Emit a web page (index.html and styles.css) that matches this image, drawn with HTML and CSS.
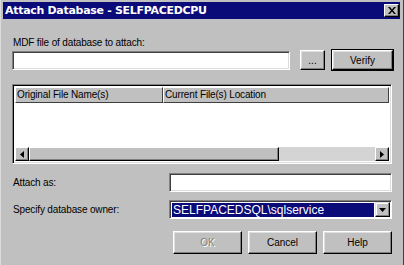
FILE: index.html
```html
<!DOCTYPE html>
<html lang="en">
  <head>
    <meta charset="UTF-8" />
    <title>Attach Database</title>
    <link rel="stylesheet" href="styles.css">
  </head>
  <body>
    <div class="window">
      <div class="titlebar">
        <span class="title">Attach Database - SELFPACEDCPU</span>
        <button class="close" aria-label="Close">
          <svg width="8" height="7" viewBox="0 0 8 7">
            <path d="M0 0h2l2 2.5L6 0h2L5 3.5 8 7H6L4 4.5 2 7H0l3-3.5z" fill="#000"/>
          </svg>
        </button>
      </div>

      <div class="content">
        <label class="label first">MDF file of database to attach:</label>
        <div class="file-row">
          <input class="field file-field" type="text" />
          <button class="btn browse">...</button>
          <button class="btn default verify">Verify</button>
        </div>

        <div class="listview">
          <div class="lv-header">
            <div class="lv-col col-1">Original File Name(s)</div>
            <div class="lv-col col-2">Current File(s) Location</div>
          </div>
          <div class="lv-body"></div>
          <div class="hscroll">
            <div class="sb-btn">
              <svg width="4" height="7" viewBox="0 0 4 7"><path d="M4 0v7L0 3.5z" fill="#000"/></svg>
            </div>
            <div class="sb-track">
              <div class="sb-thumb"></div>
            </div>
            <div class="sb-btn">
              <svg width="4" height="7" viewBox="0 0 4 7"><path d="M0 0v7l4-3.5z" fill="#000"/></svg>
            </div>
          </div>
        </div>

        <div class="form-row attach-row">
          <label class="label">Attach as:</label>
          <input class="field wide" type="text" />
        </div>
        <div class="form-row owner-row">
          <label class="label">Specify database owner:</label>
          <div class="combo">
            <div class="combo-value"><span class="selected">SELFPACEDSQL\sqlservice</span></div>
            <div class="combo-btn">
              <svg width="7" height="4" viewBox="0 0 7 4"><path d="M0 0h7L3.5 4z" fill="#000"/></svg>
            </div>
          </div>
        </div>

        <div class="actions">
          <button class="btn action disabled">OK</button>
          <button class="btn action">Cancel</button>
          <button class="btn action">Help</button>
        </div>
      </div>
    </div>
  </body>
</html>
```

FILE: styles.css
```css
body {
  margin: 0;
  background: #c0c0c0;
  font-family: "Liberation Sans", Arial, sans-serif;
  font-size: 10px;
  letter-spacing: -0.15px;
  color: #000;
}

.window {
  width: 404px;
  height: 265px;
  box-sizing: border-box;
  padding: 2px 3px 2px 2px;
  border-left: 1px solid #dcdcdc;
  border-right: 1px solid #404040;
  background: #c0c0c0;
}

.titlebar {
  height: 17px;
  background: #0a0a78;
  display: flex;
  align-items: center;
  justify-content: space-between;
  padding: 0 1px 0 2px;
}

.title {
  color: #fff;
  font-family: "DejaVu Sans", Verdana, sans-serif;
  font-weight: bold;
  font-size: 11px;
  letter-spacing: -0.3px;
}

.close {
  width: 15px;
  height: 13px;
  padding: 0;
  display: flex;
  align-items: center;
  justify-content: center;
  background: #c0c0c0;
  border: 1px solid;
  border-color: #fff #000 #000 #fff;
  box-shadow: inset -1px -1px #808080;
}

.content {
  padding: 0 0 0 9px;
}

.label {
  display: block;
  line-height: 13px;
}

.label.first {
  margin-top: 17px;
  padding-left: 1px;
}

.file-row {
  display: flex;
  align-items: center;
  margin-top: 1px;
}

.field {
  box-sizing: border-box;
  height: 19px;
  background: #fff;
  border: 1px solid;
  border-color: #808080 #fff #fff #808080;
  box-shadow: inset 1px 1px #404040, inset -1px -1px #dcdcdc;
  padding: 0 3px;
  margin: 0;
  font: inherit;
}

.file-field {
  width: 278px;
}

.btn {
  box-sizing: border-box;
  height: 20px;
  background: #c0c0c0;
  border: 1px solid;
  border-color: #fff #000 #000 #fff;
  box-shadow: inset -1px -1px #808080, inset 1px 1px #dfdfdf;
  padding: 0;
  margin: 0;
  font: inherit;
  color: #000;
}

.browse {
  width: 25px;
  margin-left: 10px;
}

.verify {
  width: 61px;
  margin-left: 7px;
}

.btn.default {
  outline: 1px solid #000;
}

.listview {
  box-sizing: border-box;
  width: 380px;
  height: 80px;
  margin-top: 14px;
  display: flex;
  flex-direction: column;
  border: 1px solid;
  border-color: #808080 #fff #fff #808080;
  box-shadow: inset 1px 1px #000, inset -1px -1px #dcdcdc;
  padding: 2px;
  background: #fff;
}

.lv-header {
  display: flex;
  height: 16px;
}

.lv-col {
  box-sizing: border-box;
  background: #c0c0c0;
  border: 1px solid;
  border-color: #fff #404040 #404040 #fff;
  line-height: 14px;
  padding-left: 1px;
  white-space: nowrap;
}

.col-1 {
  width: 148px;
}

.col-2 {
  flex: 1;
}

.lv-body {
  flex: 1;
}

.hscroll {
  display: flex;
  height: 14px;
  background: #d8d8d8;
}

.sb-btn {
  box-sizing: border-box;
  width: 14px;
  height: 14px;
  display: flex;
  align-items: center;
  justify-content: center;
  background: #c0c0c0;
  border: 1px solid;
  border-color: #fff #000 #000 #fff;
  box-shadow: inset -1px -1px #808080;
}

.sb-track {
  flex: 1;
  background: #d4d4d4;
}

.sb-thumb {
  box-sizing: border-box;
  width: 250px;
  height: 14px;
  background: #c0c0c0;
  border: 1px solid;
  border-color: #fff #000 #000 #fff;
  box-shadow: inset -1px -1px #808080;
}

.form-row {
  display: flex;
  align-items: center;
  justify-content: space-between;
  width: 380px;
}

.attach-row {
  margin-top: 9px;
}

.owner-row {
  margin-top: 8px;
}

.form-row .label {
  padding-left: 1px;
}

.wide {
  width: 223px;
}

.combo {
  box-sizing: border-box;
  width: 223px;
  height: 19px;
  display: flex;
  background: #fff;
  border: 1px solid;
  border-color: #808080 #fff #fff #808080;
  box-shadow: inset 1px 1px #404040;
  padding: 2px 1px 1px 2px;
}

.combo-value {
  flex: 1;
  display: flex;
  padding-right: 1px;
}

.selected {
  flex: 1;
  background: #0a0a78;
  color: #fff;
  font-size: 12px;
  letter-spacing: 0;
  line-height: 14px;
  padding-left: 1px;
}

.combo-btn {
  box-sizing: border-box;
  width: 15px;
  height: 15px;
  margin-top: -1px;
  display: flex;
  align-items: center;
  justify-content: center;
  background: #c0c0c0;
  border: 1px solid;
  border-color: #dfdfdf #000 #000 #dfdfdf;
  box-shadow: inset -1px -1px #808080, inset 1px 1px #fff;
}

.actions {
  display: flex;
  justify-content: flex-end;
  gap: 6px;
  width: 380px;
  margin-top: 12px;
}

.action {
  width: 69px;
  height: 23px;
}

.disabled {
  color: #808080;
  text-shadow: 1px 1px #fff;
}
```
